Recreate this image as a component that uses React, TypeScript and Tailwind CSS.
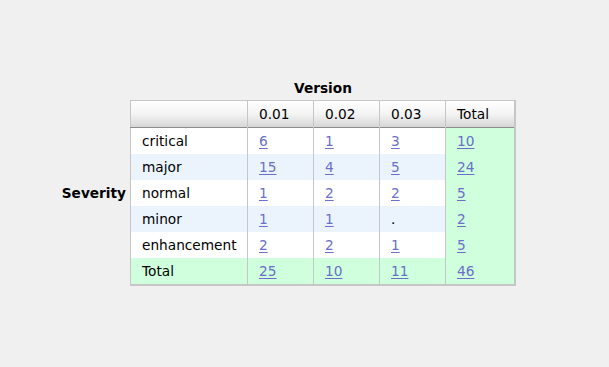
const versions = ["0.01", "0.02", "0.03"];

const rows: { name: string; cells: (number | null)[]; total: number }[] = [
  { name: "critical", cells: [6, 1, 3], total: 10 },
  { name: "major", cells: [15, 4, 5], total: 24 },
  { name: "normal", cells: [1, 2, 2], total: 5 },
  { name: "minor", cells: [1, 1, null], total: 2 },
  { name: "enhancement", cells: [2, 2, 1], total: 5 },
];

const totals = [25, 10, 11];
const grand = 46;

function Num({ n }: { n: number | null }) {
  if (n === null) return <span className="text-black">.</span>;
  return (
    <a href="#" className="text-[#6a6fc9] underline underline-offset-[2px]">
      {n}
    </a>
  );
}

export default function App() {
  return (
    <div
      className="min-h-[367px] w-full bg-[#f0f0f0] text-[13.7px] text-black"
      style={{ fontFamily: '"DejaVu Sans", Verdana, sans-serif' }}
    >
      <div className="grid grid-cols-[130px_386px] pt-[78px]">
        <div />
        <div className="h-[22px] text-center font-bold leading-[20px]">Version</div>

        {/* Severity label on the left */}
        <div className="flex items-center justify-end pr-[4px] font-bold">Severity</div>

        <table className="w-[386px] table-fixed border-collapse border-t border-l border-r-2 border-b-2 border-[#c6c6c6] leading-[26px]">
          <colgroup>
            <col className="w-[117px]" />
            <col className="w-[66px]" />
            <col className="w-[66px]" />
            <col className="w-[66px]" />
            <col />
          </colgroup>
          <thead>
            <tr className="h-[26px] border-b border-[#8c8c8c] bg-gradient-to-b from-white via-[#f4f4f4] to-[#d6d6d6]">
              <th className="border-r border-[#c6c6c6]" />
              {versions.map((v) => (
                <th
                  key={v}
                  className="border-r border-[#c6c6c6] pl-[11px] text-left font-normal"
                >
                  {v}
                </th>
              ))}
              <th className="pl-[11px] text-left font-normal">Total</th>
            </tr>
          </thead>
          <tbody>
            {rows.map((r, i) => (
              <tr key={r.name} className={i % 2 ? "bg-[#ebf4fd]" : "bg-white"}>
                <td className="border-r border-[#c6c6c6] pl-[11px]">{r.name}</td>
                {r.cells.map((c, j) => (
                  <td key={j} className="border-r border-[#c6c6c6] pl-[11px]">
                    <Num n={c} />
                  </td>
                ))}
                <td className="bg-[#cfffdc] pl-[11px]">
                  <Num n={r.total} />
                </td>
              </tr>
            ))}
            <tr className="bg-[#cfffdc]">
              <td className="border-r border-[#c6c6c6] pl-[11px]">Total</td>
              {totals.map((t, j) => (
                <td key={j} className="border-r border-[#c6c6c6] pl-[11px]">
                  <Num n={t} />
                </td>
              ))}
              <td className="pl-[11px]">
                <Num n={grand} />
              </td>
            </tr>
          </tbody>
        </table>
      </div>
    </div>
  );
}
